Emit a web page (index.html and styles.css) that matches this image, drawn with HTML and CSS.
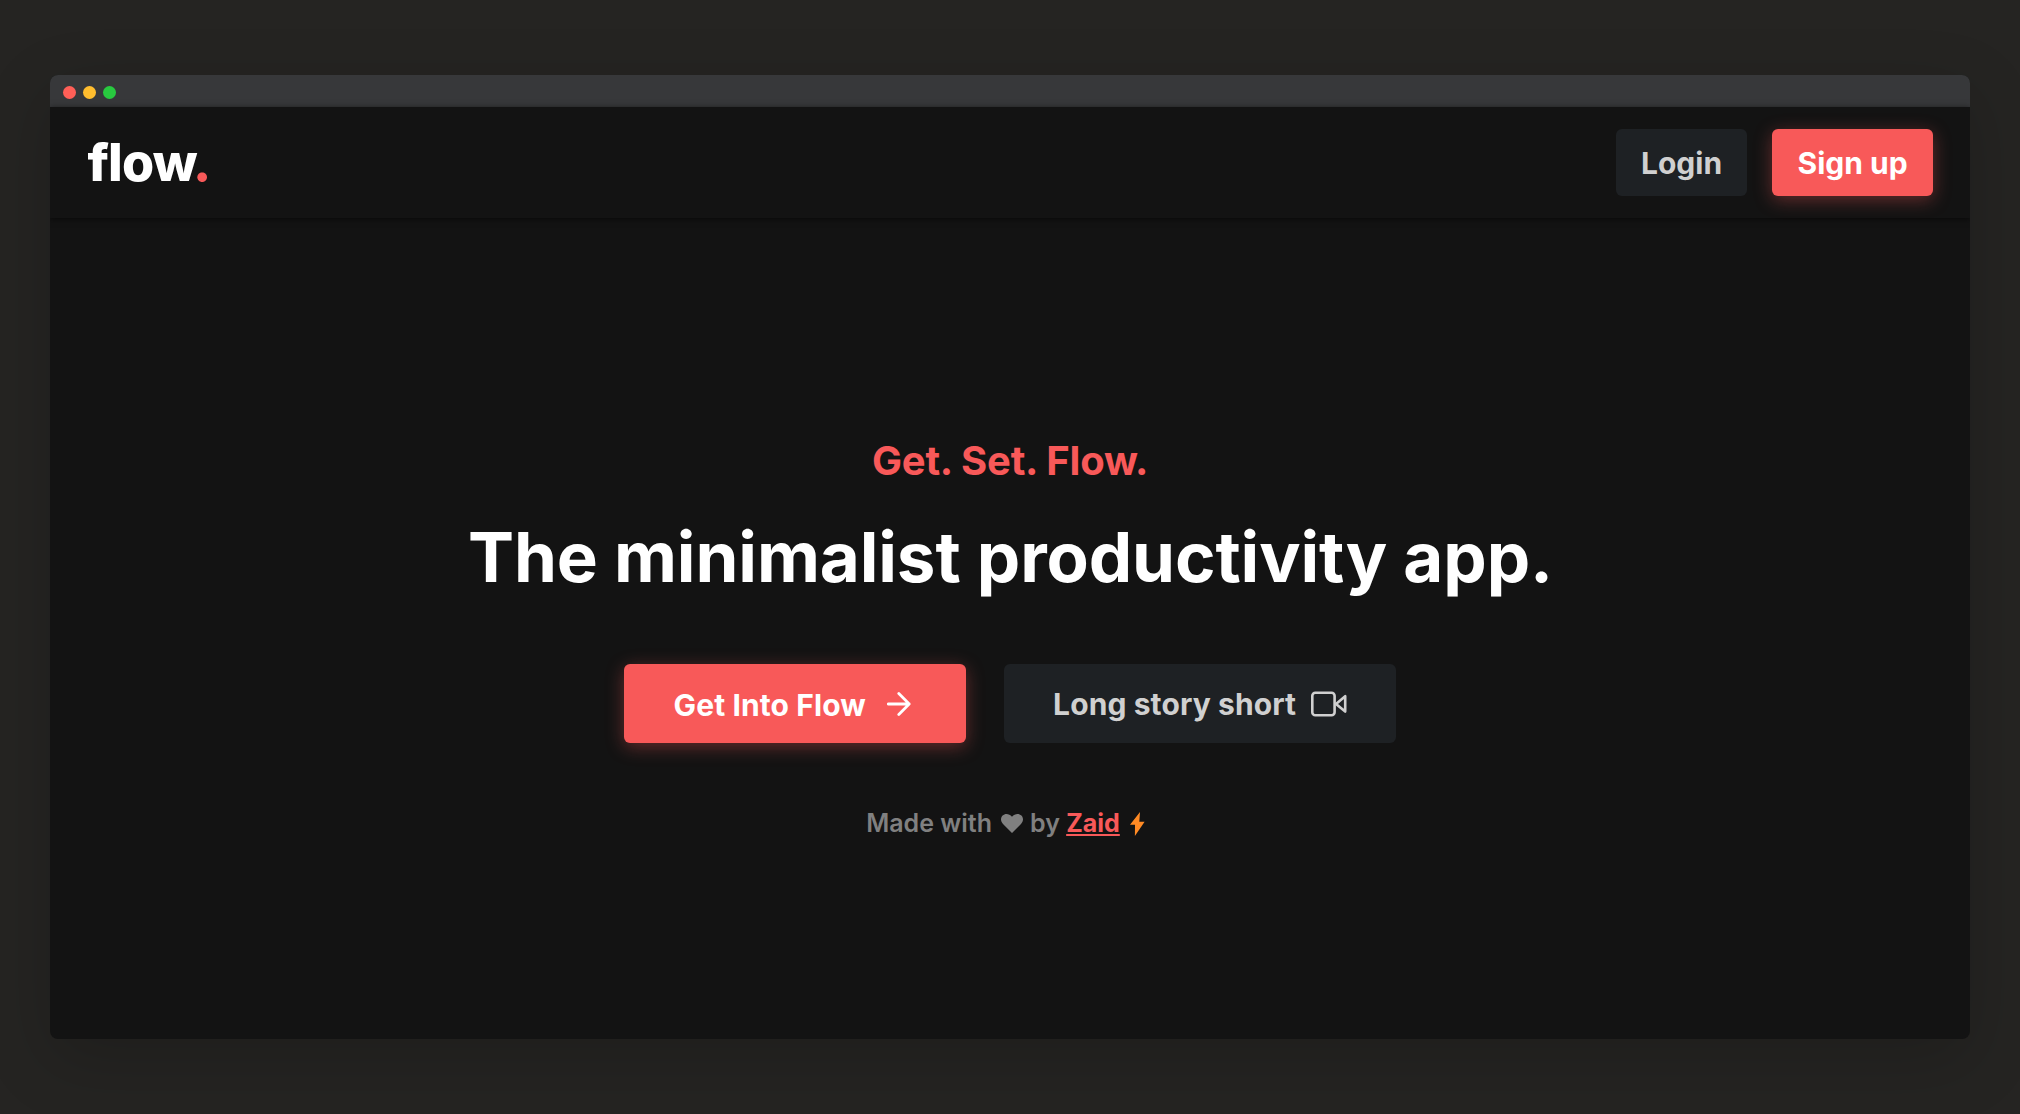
FILE: index.html
```html
<!DOCTYPE html>
<html lang="en">
<head>
<meta charset="utf-8">
<title>flow.</title>
<link rel="stylesheet" href="styles.css">
</head>
<body>
<div class="window">
  <div class="titlebar"><span class="light close"></span><span class="light minimize"></span><span class="light maximize"></span></div>
  <header class="header">
    <div class="logo">flow<span class="accent">.</span></div>
    <nav class="nav">
      <a class="btn secondary">Login</a>
      <a class="btn primary">Sign up</a>
    </nav>
  </header>
  <main class="hero">
    <h2 class="tagline">Get. Set. Flow.</h2>
    <h1 class="title">The minimalist productivity app.</h1>
    <div class="actions">
      <a class="btn large primary start"><span class="label">Get Into Flow</span>
        <svg class="arrow" viewBox="0 0 24 24"><path d="M1.300 12H22.200M11.800 1.600L22.200 12 11.800 22.400"/></svg>
      </a>
      <a class="btn large secondary"><span class="label-secondary">Long story short</span>
        <svg class="video" viewBox="0 0 36 26"><rect x="1.300" y="1.700" width="22.300" height="22.500" rx="3"/><path d="M34.200 5.200v15.400L25 12.900z"/></svg>
      </a>
    </div>
    <p class="credit"><span>Made with</span>
      <svg class="heart" viewBox="0 0 22 19"><path d="M11 19L2 10C-.6 7.300-.6 3.800 1.600 1.600 4.200-.9 8.300-.4 11 2.800 13.700-.4 17.800-.9 20.400 1.600c2.200 2.200 2.200 5.700-.4 8.400z"/></svg>
      <span>by</span> <a class="author">Zaid</a>
      <svg class="bolt" viewBox="0 0 15 24"><path d="M10 0L0 12.800h5L4.900 24 14.600 9.800H9.300z"/></svg>
    </p>
  </main>
</div>
</body>
</html>
```
FILE: styles.css
```css
* { box-sizing: border-box; }
body {
  margin: 0;
  height: 1114px;
  padding: 75px 50px;
  background: #252422;
  font-family: Inter, "Liberation Sans", sans-serif;
  overflow: hidden;
}
.window {
  display: flex;
  flex-direction: column;
  height: 964px;
  border-radius: 8px;
  background: #131313;
  box-shadow: 0 20px 68px rgba(0, 0, 0, .18);
  overflow: hidden;
}
.titlebar {
  display: flex;
  flex: none;
  gap: 7px;
  align-items: center;
  height: 32px;
  padding: 2px 13.4px 0;
  background: #37383a;
}
.light { width: 13px; height: 13px; border-radius: 50%; }
.close { background: #ff5f57; }
.minimize { background: #ffbd2e; }
.maximize { background: #28c93f; }
.header {
  display: flex;
  flex: none;
  justify-content: space-between;
  align-items: center;
  height: 111px;
  padding: 0 37px 0 37.500px;
  box-shadow: 0 1px 6px rgba(0, 0, 0, .6);
}
.logo { color: #fff; font-size: 52px; font-weight: 800; letter-spacing: -.8px; }
.accent { color: #f85959; }
.nav { display: flex; gap: 25px; }
.btn {
  display: flex;
  align-items: center;
  justify-content: center;
  height: 67px;
  padding: 0 25px;
  border-radius: 6px;
  font-size: 30px;
  font-weight: 700;
  white-space: nowrap;
}
.primary { background: #f85959; color: #fff; box-shadow: 0 4px 18px rgba(248, 89, 89, .36); }
.nav .primary { padding: 0 25.400px; }
.secondary { background: #1e2124; color: #d0d0d0; }
.hero { display: flex; flex-direction: column; align-items: center; padding-top: 219px; }
.tagline { margin: 0; color: #f85959; font-size: 40px; line-height: 48px; font-weight: 700; letter-spacing: -.2px; }
.title { margin: 30px 0 0; padding-left: 1px; color: #fff; font-size: 69px; line-height: 84px; font-weight: 700; letter-spacing: -.11px; white-space: nowrap; }
.actions { display: flex; gap: 38px; margin-top: 65px; }
.large { height: 79px; padding: 0 49px; }
.start { padding: 0 55px 0 49.500px; }
.label { padding-top: 2px; letter-spacing: .1px; }
.label-secondary { letter-spacing: .1px; }
svg { display: block; fill: none; stroke: currentColor; stroke-width: 2.6; stroke-linecap: round; stroke-linejoin: round; }
.arrow { width: 24px; height: 24px; margin-left: 21.200px; stroke-width: 2.8; }
.video { width: 36px; height: 26px; margin-left: 14.700px; }
.credit { display: flex; align-items: center; margin: 64px 9px 0 0; color: #808080; font-size: 25px; line-height: 32px; font-weight: 600; }
.author { margin-left: 6.300px; color: #f85959; font-weight: 700; text-decoration: underline; }
.heart { width: 22px; height: 19px; margin: 0 7.500px 0 8.500px; fill: #808080; stroke: none; }
.bolt { width: 15px; height: 24px; margin: 2px 0 0 10px; fill: #ff8a24; stroke: none; }
```
